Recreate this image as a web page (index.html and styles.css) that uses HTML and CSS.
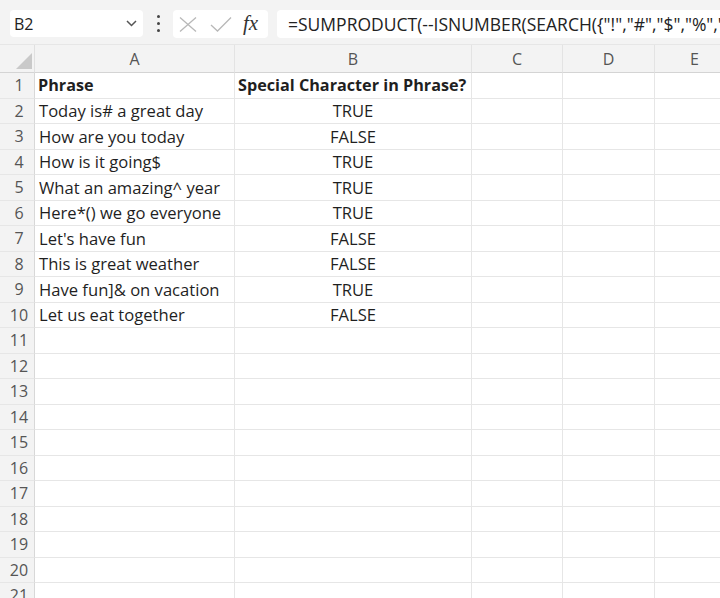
FILE: index.html
```html
<!DOCTYPE html>
<html>
<head>
<meta charset="utf-8">
<link rel="stylesheet" href="styles.css">
</head>
<body>
<div class="app">
  <div class="toolbar">
    <div class="namebox">
      <span class="ref">B2</span>
      <svg class="chev" width="11" height="7" viewBox="0 0 11 7"><path d="M1 1 L5.5 5.5 L10 1" fill="none" stroke="#555" stroke-width="1.5"/></svg>
    </div>
    <div class="dots"><span></span><span></span><span></span></div>
    <div class="fbox">
      <svg class="ico" width="18" height="15" viewBox="0 0 18 15"><path d="M1 0.5 L17 14.5 M17 0.5 L1 14.5" stroke="#b8b8b8" stroke-width="1.3" fill="none"/></svg>
      <svg class="ico" width="22" height="15" viewBox="0 0 22 15"><path d="M1 8 L7.5 14 L21 0.5" stroke="#b8b8b8" stroke-width="1.3" fill="none"/></svg>
      <span class="fx">fx</span>
    </div>
    <div class="formula">=SUMPRODUCT(--ISNUMBER(SEARCH({"!","#","$","%","^","&amp;","*","(",")","]"},A2))))&gt;0</div>
  </div>
  <div class="sheet">
    <div class="hdr corner"><span class="tri"></span></div>
    <div class="hdr col">A</div>
    <div class="hdr col">B</div>
    <div class="hdr col">C</div>
    <div class="hdr col">D</div>
    <div class="hdr col">E</div>

    <div class="rn">1</div><div class="c b">Phrase</div><div class="c b">Special Character in Phrase?</div><div class="c"></div><div class="c"></div><div class="c"></div>
    <div class="rn">2</div><div class="c">Today is# a great day</div><div class="c ctr">TRUE</div><div class="c"></div><div class="c"></div><div class="c"></div>
    <div class="rn">3</div><div class="c">How are you today</div><div class="c ctr">FALSE</div><div class="c"></div><div class="c"></div><div class="c"></div>
    <div class="rn">4</div><div class="c">How is it going$</div><div class="c ctr">TRUE</div><div class="c"></div><div class="c"></div><div class="c"></div>
    <div class="rn">5</div><div class="c">What an amazing^ year</div><div class="c ctr">TRUE</div><div class="c"></div><div class="c"></div><div class="c"></div>
    <div class="rn">6</div><div class="c">Here*() we go everyone</div><div class="c ctr">TRUE</div><div class="c"></div><div class="c"></div><div class="c"></div>
    <div class="rn">7</div><div class="c">Let's have fun</div><div class="c ctr">FALSE</div><div class="c"></div><div class="c"></div><div class="c"></div>
    <div class="rn">8</div><div class="c">This is great weather</div><div class="c ctr">FALSE</div><div class="c"></div><div class="c"></div><div class="c"></div>
    <div class="rn">9</div><div class="c">Have fun]&amp; on vacation</div><div class="c ctr">TRUE</div><div class="c"></div><div class="c"></div><div class="c"></div>
    <div class="rn">10</div><div class="c">Let us eat together</div><div class="c ctr">FALSE</div><div class="c"></div><div class="c"></div><div class="c"></div>
    <div class="rn">11</div><div class="c"></div><div class="c"></div><div class="c"></div><div class="c"></div><div class="c"></div>
    <div class="rn">12</div><div class="c"></div><div class="c"></div><div class="c"></div><div class="c"></div><div class="c"></div>
    <div class="rn">13</div><div class="c"></div><div class="c"></div><div class="c"></div><div class="c"></div><div class="c"></div>
    <div class="rn">14</div><div class="c"></div><div class="c"></div><div class="c"></div><div class="c"></div><div class="c"></div>
    <div class="rn">15</div><div class="c"></div><div class="c"></div><div class="c"></div><div class="c"></div><div class="c"></div>
    <div class="rn">16</div><div class="c"></div><div class="c"></div><div class="c"></div><div class="c"></div><div class="c"></div>
    <div class="rn">17</div><div class="c"></div><div class="c"></div><div class="c"></div><div class="c"></div><div class="c"></div>
    <div class="rn">18</div><div class="c"></div><div class="c"></div><div class="c"></div><div class="c"></div><div class="c"></div>
    <div class="rn">19</div><div class="c"></div><div class="c"></div><div class="c"></div><div class="c"></div><div class="c"></div>
    <div class="rn">20</div><div class="c"></div><div class="c"></div><div class="c"></div><div class="c"></div><div class="c"></div>
    <div class="rn">21</div><div class="c"></div><div class="c"></div><div class="c"></div><div class="c"></div><div class="c"></div>
  </div>
</div>
</body>
</html>
```

FILE: styles.css
```css
html, body {
  margin: 0;
  padding: 0;
  background: #ffffff;
}
body {
  font-family: "Open Sans", "Liberation Sans", sans-serif;
  color: #1f1f1f;
  overflow: hidden;
  width: 720px;
  height: 598px;
}
.app {
  width: 720px;
  height: 598px;
  overflow: hidden;
}
.toolbar {
  height: 45px;
  box-sizing: border-box;
  background: #f3f3f3;
  display: flex;
  align-items: flex-start;
  padding: 10px 0 0 10px;
  border-bottom: 1px solid #e6e6e6;
  white-space: nowrap;
}
.namebox {
  width: 133px;
  height: 27px;
  box-sizing: border-box;
  background: #ffffff;
  border-radius: 4px;
  display: flex;
  align-items: center;
  justify-content: space-between;
  padding: 0 6px 0 4px;
  flex: none;
}
.ref {
  font-size: 16px;
  color: #222;
}
.chev { display: block; }
.dots {
  width: 30px;
  height: 27px;
  display: flex;
  flex-direction: column;
  align-items: center;
  justify-content: center;
  gap: 4px;
  flex: none;
}
.dots span {
  width: 3px;
  height: 3px;
  border-radius: 50%;
  background: #444;
}
.fbox {
  width: 95px;
  height: 28px;
  box-sizing: border-box;
  background: #ffffff;
  border-radius: 4px;
  display: flex;
  align-items: center;
  padding: 0 0 0 6px;
  gap: 13px;
  flex: none;
}
.ico { display: block; flex: none; }
.fx {
  font-family: "Liberation Serif", "DejaVu Serif", serif;
  font-style: italic;
  font-size: 21px;
  color: #333;
  margin-left: -2px;
  line-height: 1;
  padding-bottom: 2px;
}
.formula {
  margin-left: 9px;
  height: 28px;
  flex: 1;
  background: #ffffff;
  border-radius: 4px 0 0 4px;
  font-size: 17.5px;
  line-height: 28px;
  padding-left: 11px;
  color: #222;
  overflow: hidden;
}
.sheet {
  display: grid;
  grid-template-columns: 35px 200px 237px 91px 92px 80px;
  grid-template-rows: 28px repeat(21, 25.5px);
  font-size: 16.6px;
}
.hdr {
  background: #f3f3f3;
  border-bottom: 1px solid #d4d4d4;
  box-sizing: border-box;
}
.corner {
  position: relative;
  border-right: 1px solid #e0e0e0;
}
.tri {
  position: absolute;
  right: 2px;
  bottom: 3px;
  width: 0;
  height: 0;
  border-left: 16px solid transparent;
  border-bottom: 16px solid #c9c9c9;
}
.col {
  display: flex;
  align-items: center;
  justify-content: center;
  color: #555;
  font-size: 16px;
  border-right: 1px solid #e3e3e3;
}
.rn {
  background: #f3f3f3;
  color: #555;
  display: flex;
  align-items: center;
  justify-content: center;
  padding-left: 4px;
  font-size: 16px;
  box-sizing: border-box;
  border-right: 1px solid #d8d8d8;
  border-bottom: 1px solid #e6e6e6;
}
.c {
  border-right: 1px solid #e6e6e6;
  border-bottom: 1px solid #e6e6e6;
  box-sizing: border-box;
  display: flex;
  align-items: center;
  padding: 0 4px;
  white-space: nowrap;
  overflow: visible;
}
.b { font-weight: 700; padding-left: 3px; font-size: 16.2px; }
.ctr { justify-content: center; }
```
